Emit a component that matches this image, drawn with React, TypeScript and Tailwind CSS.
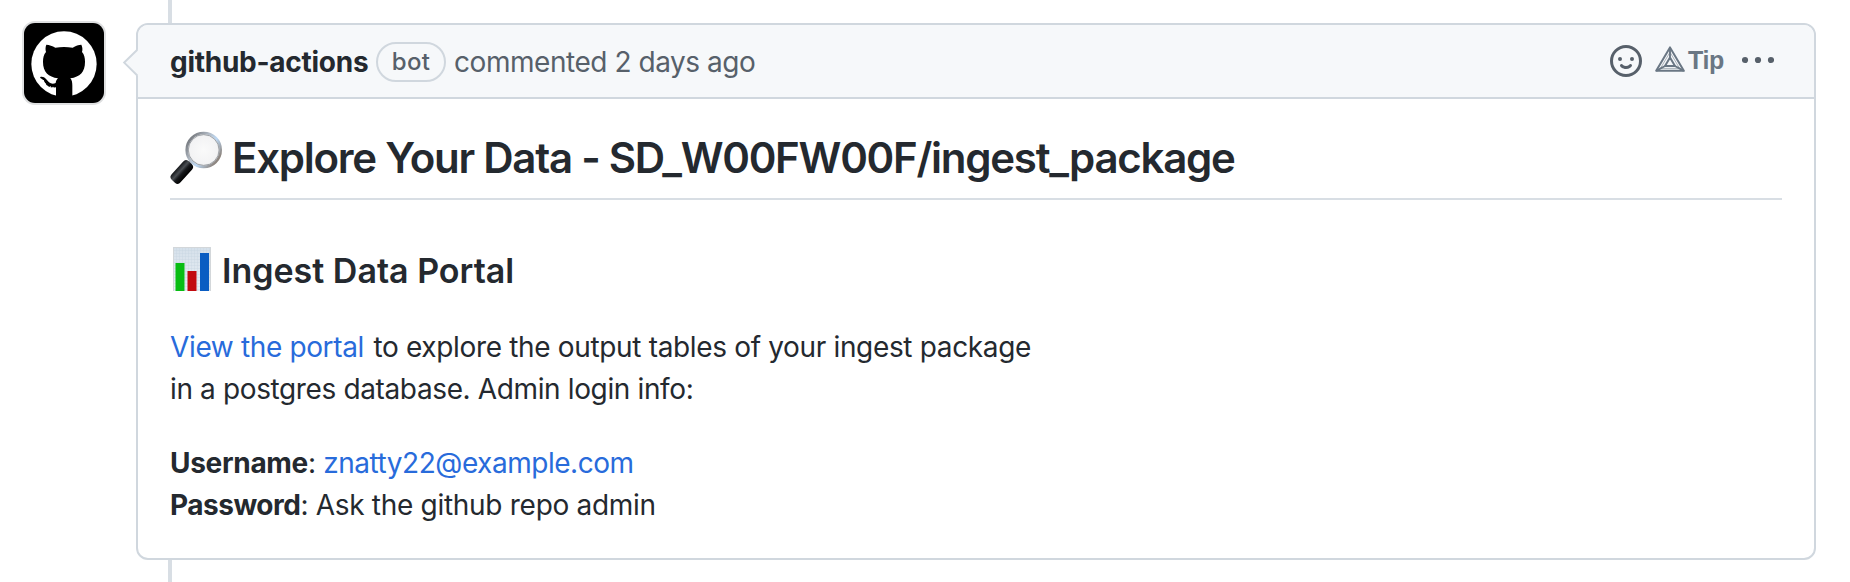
import type { ReactNode } from "react";

function OctocatAvatar() {
  return (
    <svg viewBox="72 69 240 240" className="block size-20 rounded-[11px] bg-black ring-2 ring-[#dfe0e1]" aria-hidden="true">
      <circle cx="192" cy="192" r="98" fill="#fff" />
      <path
        fill="#000"
        d="M139 134C148 134 157 138 166 143C183 140 201 140 218 143C227 137 236 134 244 134C248 142 248 150 246 156C253 164 255 174 255 186C255 216 240 231 211 235C216 241 217 248 217 257V300H168V262C150 265 141 259 136 250C132 242 128 237 121 234C118 230 127 229 132 232C139 236 142 243 147 247C153 252 161 252 167 249C168 243 170 239 174 235C145 231 129 216 129 186C129 174 131 164 138 156C136 149 136 141 139 134Z"
      />
      <g fill="#fff">
        <circle cx="130" cy="242" r="2" />
        <circle cx="135" cy="251" r="2" />
        <circle cx="142" cy="259" r="2" />
        <circle cx="151" cy="261" r="2" />
        <circle cx="159" cy="262" r="2" />
      </g>
    </svg>
  );
}

function SmileyIcon() {
  return (
    <svg viewBox="0 0 16 16" className="size-8 text-[#57606a]" fill="currentColor" aria-hidden="true">
      <path
        fillRule="evenodd"
        d="M1.5 8a6.5 6.5 0 1113 0 6.5 6.5 0 01-13 0zM8 0a8 8 0 100 16A8 8 0 008 0zM5 8a1 1 0 100-2 1 1 0 000 2zm7-1a1 1 0 11-2 0 1 1 0 012 0zM5.32 9.636a.75.75 0 011.038.175l.007.009c.103.118.22.222.35.31.264.178.683.37 1.285.37.602 0 1.02-.192 1.285-.371.13-.088.247-.192.35-.31l.007-.008a.75.75 0 111.222.87l-.614-.431c.614.43.614.431.613.431v.001l-.001.002-.002.003-.005.007-.014.019a1.984 1.984 0 01-.184.213c-.16.166-.338.316-.53.445-.63.418-1.37.638-2.127.629-.946 0-1.652-.308-2.126-.63a3.32 3.32 0 01-.715-.657l-.014-.02-.005-.006-.002-.003v-.002h-.001l.613-.432-.614.43a.75.75 0 01.183-1.044h.001z"
      />
    </svg>
  );
}

function TipIcon() {
  return (
    <svg viewBox="0 0 30 26" className="h-[26px] w-[30px]" fill="none" stroke="currentColor" strokeLinejoin="round" aria-hidden="true">
      <path strokeWidth="2" d="M15 1.4L28.8 24.8H1.2Z" />
      <path strokeWidth="2" d="M15 11.5L20 20H10Z" />
      <path strokeWidth="1.9" d="M15 1.4V11.5M1.2 24.8L10 20M28.8 24.8L20 20" />
      <path strokeWidth="0.9" opacity="0.6" d="M15 6.2L24.6 22.4H5.4Z" />
    </svg>
  );
}

function KebabIcon() {
  return (
    <svg viewBox="0 0 32 8" className="h-2 w-8 text-[#57606a]" fill="currentColor" aria-hidden="true">
      <circle cx="3" cy="4" r="3.1" />
      <circle cx="16" cy="4" r="3.1" />
      <circle cx="29" cy="4" r="3.1" />
    </svg>
  );
}

function MagnifierEmoji() {
  return (
    <svg viewBox="0 0 52 53" className="h-[53px] w-[52px] shrink-0" role="img" aria-label="magnifying glass">
      <defs>
        <linearGradient id="rim" x1="0.1" y1="0.2" x2="0.9" y2="0.8">
          <stop offset="0" stopColor="#7d8187" />
          <stop offset="0.35" stopColor="#b4bdc8" />
          <stop offset="0.6" stopColor="#bcd8f4" />
          <stop offset="1" stopColor="#8d857f" />
        </linearGradient>
        <radialGradient id="glass">
          <stop offset="0" stopColor="#fafafa" />
          <stop offset="0.8" stopColor="#f3f3f4" />
          <stop offset="1" stopColor="#e2e4e6" />
        </radialGradient>
        <linearGradient id="grip" x1="0" y1="0" x2="0" y2="1">
          <stop offset="0" stopColor="#15171a" />
          <stop offset="0.35" stopColor="#4a4e53" />
          <stop offset="0.6" stopColor="#16181b" />
          <stop offset="1" stopColor="#000" />
        </linearGradient>
      </defs>
      <path d="M19 33L23 29" stroke="#8b8e92" strokeWidth="5" />
      <rect x="-12.5" y="-6" width="25" height="12" rx="4" fill="url(#grip)" transform="translate(11.8 41) rotate(-48)" />
      <circle cx="33.7" cy="19" r="17" fill="url(#glass)" stroke="url(#rim)" strokeWidth="2.6" />
      <circle cx="33.7" cy="19" r="15.4" fill="none" stroke="#8d9196" strokeWidth="0.8" />
    </svg>
  );
}

function BarChartEmoji() {
  return (
    <svg viewBox="0 0 38 44" className="h-11 w-[38px] shrink-0" role="img" aria-label="bar chart">
      <defs>
        <pattern id="chart-grid" width="3" height="3" patternUnits="userSpaceOnUse">
          <path d="M0 0H3M0 0V3" stroke="#c5d3df" strokeWidth="0.7" />
        </pattern>
        <linearGradient id="sheet" x1="0" y1="0" x2="0" y2="1">
          <stop offset="0" stopColor="#d5e0ea" />
          <stop offset="1" stopColor="#e9eff5" />
        </linearGradient>
      </defs>
      <rect width="38" height="44" fill="url(#sheet)" />
      <rect width="38" height="44" fill="url(#chart-grid)" />
      <path d="M0.5 44V0.5H37.5V44" fill="none" stroke="#d3d7da" />
      <rect x="2.5" y="16" width="9" height="28" fill="#08bd13" />
      <rect x="14.5" y="24" width="9" height="20" fill="#c20a0f" />
      <rect x="27" y="6" width="9" height="38" fill="#0a5dc2" />
    </svg>
  );
}

function Link({ children, className }: { children: ReactNode; className?: string }) {
  return (
    <a href="#" className={`text-[#286bdb] ${className ?? ""}`}>
      {children}
    </a>
  );
}

function CommentHeader() {
  return (
    <header className="relative flex h-[74px] items-center rounded-t-[10px] border-b-2 border-[#d0d7de] bg-[#f6f8fa] pr-10 pl-8 leading-[42px] text-[#57606a]">
      <svg viewBox="0 0 16 28" className="absolute top-[24px] -left-[16px] h-7 w-4" aria-hidden="true">
        <path d="M16 0.5L2.4 13.6L16 26.7Z" fill="#f6f8fa" />
        <path d="M15.3 0.7L2.2 13.6L15.3 26.5" fill="none" stroke="#d0d7de" strokeWidth="2" />
      </svg>
      <div className="flex grow items-center">
        <strong className="mt-px w-[206px] font-[650] tracking-[-0.27px] text-[#24292f]">github-actions</strong>
        <span className="mt-[2px] mr-[7px] flex h-10 w-[70px] items-center justify-center rounded-full border-2 border-[#d0d7de] text-2xl font-medium tracking-[0.35px]">
          bot
        </span>
        <span className="mt-px ml-px tracking-[-0.45px]">commented 2 days ago</span>
      </div>
      <div className="flex items-center">
        <SmileyIcon />
        <div className="mb-[4px] ml-[13px] flex items-center gap-[3px] text-[#6a7784]">
          <TipIcon />
          <span className="mt-px w-9 font-['Liberation_Sans',sans-serif] text-[25px] leading-[26px] font-bold tracking-[-0.4px]">
            Tip
          </span>
        </div>
        <div className="mb-[2px] ml-[18px]">
          <KebabIcon />
        </div>
      </div>
    </header>
  );
}

export default function App() {
  return (
    <main className="flex h-[582px] w-[1850px] overflow-hidden bg-white font-['Inter',sans-serif] text-[28px] text-[#24292f] antialiased">
      <aside className="w-[136px] shrink-0 pt-[23px] pl-6">
        <OctocatAvatar />
      </aside>
      <div className="flex w-[1680px] flex-col">
        <div className="ml-8 h-[23px] w-1 shrink-0 bg-[#d8dee4]" />
        <article className="h-[537px] shrink-0 rounded-xl border-2 border-[#d0d7de] bg-white">
          <CommentHeader />
          <div className="px-8 pt-[34px]">
            <h1 className="flex h-[67px] border-b-2 border-[#d8dee4] text-[42px] leading-[50px] font-semibold">
              <span className="-mt-[2px] mr-[10px] flex">
                <MagnifierEmoji />
              </span>
              <span className="tracking-[-1.26px]">Explore Your Data - SD_W00FW00F/ingest_package</span>
            </h1>
            <h2 className="mt-[49px] flex h-11 text-[34px] leading-[44px] font-semibold">
              <span className="-mt-[2px] mr-[11px] ml-[3px] flex">
                <BarChartEmoji />
              </span>
              <span>Ingest Data Portal</span>
            </h2>
            <p className="mt-[33px] leading-[42px] tracking-[-0.34px]">
              <Link className="mr-[2px] tracking-[-0.36px]">View the portal</Link> to explore the output tables of your ingest package
              <br />
              <span className="tracking-[-0.37px]">in a postgres database. Admin login info:</span>
            </p>
            <p className="mt-8 leading-[42px] tracking-[-0.34px]">
              <strong className="font-[650] tracking-[-0.3px]">Username</strong>:{" "}
              <Link className="tracking-[-0.47px]">znatty22@example.com</Link>
              <br />
              <strong className="font-[650] tracking-[-0.5px]">Password</strong>:{" "}
              <span className="tracking-[-0.29px]">Ask the github repo admin</span>
            </p>
          </div>
        </article>
        <div className="ml-8 w-1 grow bg-[#d8dee4]" />
      </div>
    </main>
  );
}
